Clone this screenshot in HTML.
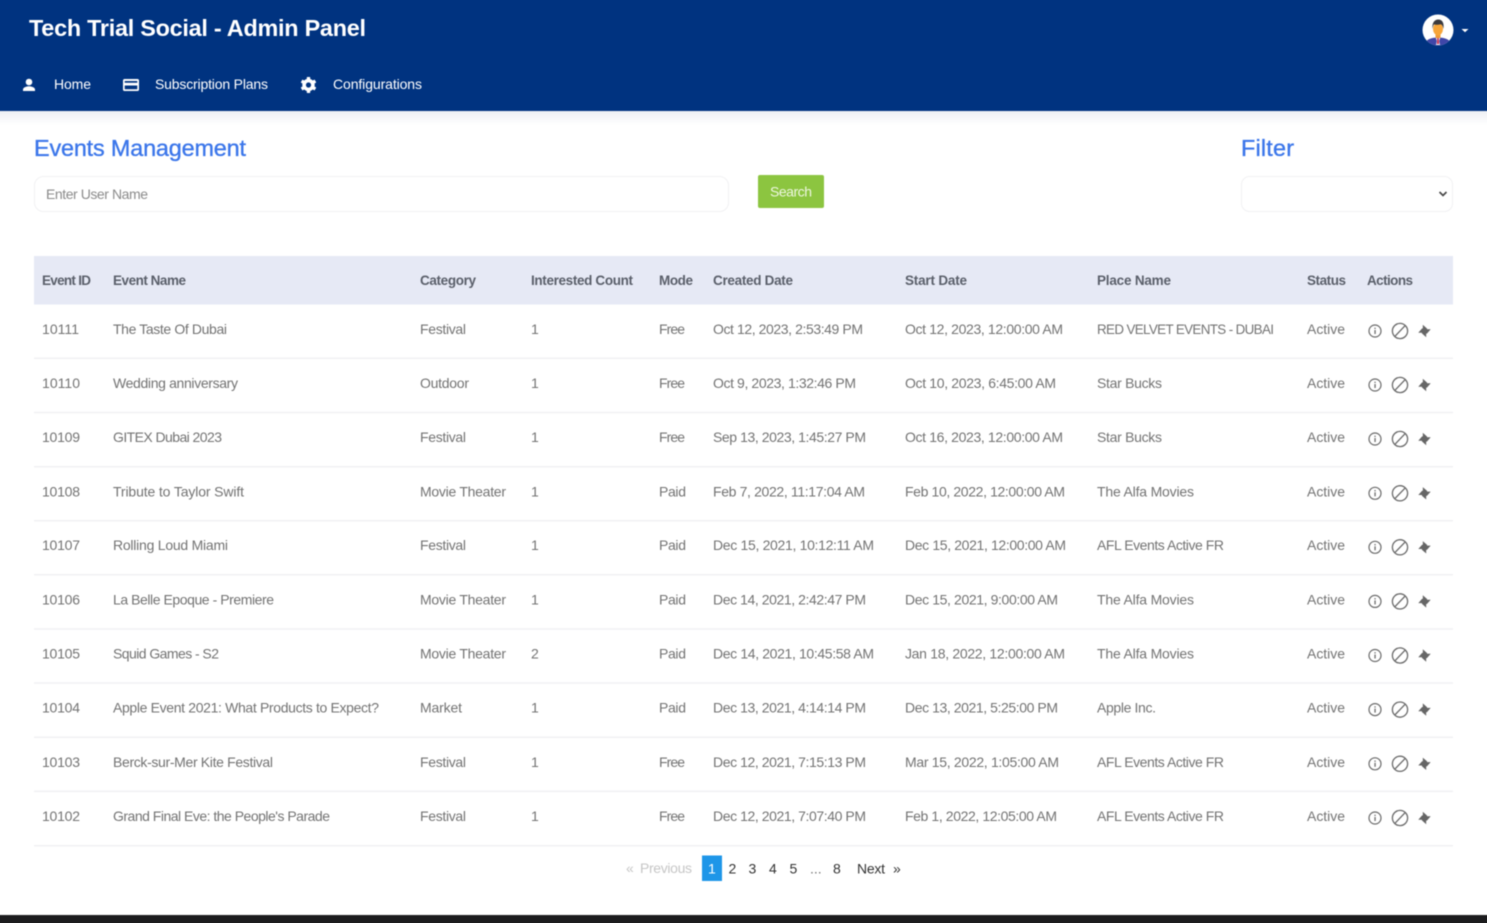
<!DOCTYPE html>
<html lang="en">
<head>
<meta charset="utf-8">
<title>Tech Trial Social - Admin Panel</title>
<style>
html,body{margin:0;padding:0;width:1487px;height:923px;overflow:hidden;background:#fff}
svg{display:block}
#r{filter:blur(.4px)}
text{font-family:"Liberation Sans",Arial,sans-serif}
.c{font-size:14px;fill:#737373}
.h{font-size:13.5px;font-weight:700;fill:#5a5f6a}
.n{font-size:14px;fill:#fff}
.t{font-size:23.4px;font-weight:700;fill:#fff}
.b{font-size:23.4px;fill:#3b76ea;stroke:#3b76ea;stroke-width:.35px}
.p{font-size:14px;fill:#333}
.d{font-size:14px;fill:#c6c6c6}
</style>
</head>
<body>
<svg width="1487" height="923" viewBox="0 0 1487 923" xmlns="http://www.w3.org/2000/svg">
<defs>
<linearGradient id="sh" x1="0" y1="0" x2="0" y2="1"><stop offset="0" stop-color="#eef0f4"/><stop offset="1" stop-color="#fff"/></linearGradient>
<path id="arm" d="M-1.700 1V-6.200L2.600-2.400V1z" fill="#666"/>
<g id="ic">
<circle cx="1375" cy="331" r="6" fill="none" stroke="#6a6a6a" stroke-width="1.200"/>
<rect x="1374.400" y="330" width="1.300" height="4" fill="#6a6a6a"/><rect x="1374.400" y="327.700" width="1.300" height="1.300" fill="#6a6a6a"/>
<circle cx="1400" cy="331" r="7.600" fill="none" stroke="#6a6a6a" stroke-width="1.300"/>
<path d="M1394.800 336.400L1405.200 325.600" stroke="#6a6a6a" stroke-width="1.300"/>
<g transform="translate(1424.500 331)">
<use href="#arm"/><use href="#arm" transform="rotate(90)"/><use href="#arm" transform="rotate(180)"/><use href="#arm" transform="rotate(270)"/>
</g>
</g>
</defs>

<g id="r">
<rect x="-10" y="-10" width="1507" height="943" fill="#fff"/>
<rect x="-10" y="-10" width="1507" height="121" fill="#003380"/>
<rect x="-10" y="111" width="1507" height="14" fill="url(#sh)"/>
<text class="t" x="29" y="36" textLength="337">Tech Trial Social - Admin Panel</text>

<circle cx="29" cy="82" r="3.300" fill="#fff"/>
<path d="M23 91v-1.600c0-2 3.600-3.200 6-3.200s6 1.200 6 3.200V91z" fill="#fff"/>
<text class="n" x="54" y="89" textLength="37">Home</text>

<path fill-rule="evenodd" d="M124.500 79h13c.9 0 1.500.7 1.500 1.500v9c0 .9-.6 1.500-1.500 1.500h-13c-.9 0-1.500-.6-1.500-1.500v-9c0-.8.6-1.500 1.500-1.500zM124.700 81v1.800h12.600V81zM124.700 85.500v3.800h12.600v-3.800z" fill="#fff"/>
<text class="n" x="155" y="89" textLength="113">Subscription Plans</text>

<g transform="translate(308.500 85)">
<circle r="4.400" fill="none" stroke="#fff" stroke-width="3.600"/>
<g fill="#fff">
<rect x="-1.700" y="-8" width="3.400" height="3" rx=".5"/>
<rect x="-1.700" y="5" width="3.400" height="3" rx=".5"/>
<rect x="-1.700" y="-8" width="3.400" height="3" rx=".5" transform="rotate(60)"/>
<rect x="-1.700" y="-8" width="3.400" height="3" rx=".5" transform="rotate(120)"/>
<rect x="-1.700" y="-8" width="3.400" height="3" rx=".5" transform="rotate(240)"/>
<rect x="-1.700" y="-8" width="3.400" height="3" rx=".5" transform="rotate(300)"/>
</g>
</g>
<text class="n" x="333" y="89" textLength="89">Configurations</text>

<clipPath id="av"><circle cx="1438" cy="30" r="15.500"/></clipPath>
<circle cx="1438" cy="30" r="15.500" fill="#fff"/>
<g clip-path="url(#av)">
<path d="M1426 46v-3c0-3.500 5-5.500 12-5.500s12 2 12 5.500v3z" fill="#3f46a8"/>
<path d="M1435.500 37h5l-1.300 4 .8 4h-4l.8-4z" fill="#f3f3f3"/>
<path d="M1437.200 38h1.600l.3 6h-2.200z" fill="#c8385a"/>
<rect x="1435.500" y="32" width="5" height="6" fill="#f09a35"/>
<ellipse cx="1438" cy="29" rx="5" ry="6.300" fill="#f6a53a"/>
<path d="M1432.500 29c-.8-6 2-9.500 5.800-9.500s6 3 5.200 9.500c-.6-3-1.500-4.500-3-4.800-2.500.8-5 .6-6.500.2-1 1-1.200 2.800-1.500 4.600z" fill="#3a3a3e"/>
</g>
<path d="M1461.500 29h7l-3.500 3.200z" fill="#fff"/>

<text class="b" x="34" y="156" textLength="212">Events Management</text>
<text class="b" x="1241" y="156" textLength="53">Filter</text>

<rect x="34.500" y="176.500" width="694" height="35" rx="9" fill="#fff" stroke="#f1f1f3"/>
<text x="46" y="199" font-size="14" fill="#8b8b8b" textLength="102">Enter User Name</text>
<rect x="758" y="175" width="66" height="33" rx="2" fill="#8cc540"/>
<text x="770" y="196.500" font-size="14" fill="#eef7e0" textLength="42">Search</text>
<rect x="1241.500" y="176.500" width="211" height="35" rx="8" fill="#fff" stroke="#f1f1f3"/>
<path d="M1439.500 192l3.500 3.500 3.500-3.500" fill="none" stroke="#444" stroke-width="1.600"/>

<rect x="34" y="256" width="1419" height="48.500" fill="#e6e9f5"/>
<text class="h" x="42" y="285" textLength="49">Event ID</text>
<text class="h" x="113" y="285" textLength="73">Event Name</text>
<text class="h" x="420" y="285" textLength="56">Category</text>
<text class="h" x="531" y="285" textLength="102">Interested Count</text>
<text class="h" x="659" y="285" textLength="34">Mode</text>
<text class="h" x="713" y="285" textLength="80">Created Date</text>
<text class="h" x="905" y="285" textLength="62">Start Date</text>
<text class="h" x="1097" y="285" textLength="74">Place Name</text>
<text class="h" x="1307" y="285" textLength="39">Status</text>
<text class="h" x="1367" y="285" textLength="46">Actions</text>

<text class="c" x="42" y="334" textLength="37">10111</text><text class="c" x="113" y="334" textLength="114">The Taste Of Dubai</text><text class="c" x="420" y="334" textLength="46">Festival</text><text class="c" x="531" y="334">1</text><text class="c" x="659" y="334" textLength="26">Free</text><text class="c" x="713" y="334" textLength="150">Oct 12, 2023, 2:53:49 PM</text><text class="c" x="905" y="334" textLength="158">Oct 12, 2023, 12:00:00 AM</text><text class="c" x="1097" y="334" textLength="177" style="font-size:13.4px">RED VELVET EVENTS - DUBAI</text><text class="c" x="1307" y="334" textLength="38">Active</text>
<use href="#ic"/><rect x="34" y="357.500" width="1419" height="1.500" fill="#f1f1f3"/>

<text class="c" x="42" y="388" textLength="38">10110</text><text class="c" x="113" y="388" textLength="125">Wedding anniversary</text><text class="c" x="420" y="388" textLength="49">Outdoor</text><text class="c" x="531" y="388">1</text><text class="c" x="659" y="388" textLength="26">Free</text><text class="c" x="713" y="388" textLength="143">Oct 9, 2023, 1:32:46 PM</text><text class="c" x="905" y="388" textLength="151">Oct 10, 2023, 6:45:00 AM</text><text class="c" x="1097" y="388" textLength="65">Star Bucks</text><text class="c" x="1307" y="388" textLength="38">Active</text>
<use href="#ic" y="54"/><rect x="34" y="411.800" width="1419" height="1.500" fill="#f1f1f3"/>

<text class="c" x="42" y="442" textLength="38">10109</text><text class="c" x="113" y="442" textLength="109">GITEX Dubai 2023</text><text class="c" x="420" y="442" textLength="46">Festival</text><text class="c" x="531" y="442">1</text><text class="c" x="659" y="442" textLength="26">Free</text><text class="c" x="713" y="442" textLength="153">Sep 13, 2023, 1:45:27 PM</text><text class="c" x="905" y="442" textLength="158">Oct 16, 2023, 12:00:00 AM</text><text class="c" x="1097" y="442" textLength="65">Star Bucks</text><text class="c" x="1307" y="442" textLength="38">Active</text>
<use href="#ic" y="108"/><rect x="34" y="466" width="1419" height="1.500" fill="#f1f1f3"/>

<text class="c" x="42" y="496.500" textLength="38">10108</text><text class="c" x="113" y="496.500" textLength="131">Tribute to Taylor Swift</text><text class="c" x="420" y="496.500" textLength="86">Movie Theater</text><text class="c" x="531" y="496.500">1</text><text class="c" x="659" y="496.500" textLength="27">Paid</text><text class="c" x="713" y="496.500" textLength="152">Feb 7, 2022, 11:17:04 AM</text><text class="c" x="905" y="496.500" textLength="160">Feb 10, 2022, 12:00:00 AM</text><text class="c" x="1097" y="496.500" textLength="97">The Alfa Movies</text><text class="c" x="1307" y="496.500" textLength="38">Active</text>
<use href="#ic" y="162.300"/><rect x="34" y="520" width="1419" height="1.500" fill="#f1f1f3"/>

<text class="c" x="42" y="550" textLength="38">10107</text><text class="c" x="113" y="550" textLength="115">Rolling Loud Miami</text><text class="c" x="420" y="550" textLength="46">Festival</text><text class="c" x="531" y="550">1</text><text class="c" x="659" y="550" textLength="27">Paid</text><text class="c" x="713" y="550" textLength="161">Dec 15, 2021, 10:12:11 AM</text><text class="c" x="905" y="550" textLength="161">Dec 15, 2021, 12:00:00 AM</text><text class="c" x="1097" y="550" textLength="127">AFL Events Active FR</text><text class="c" x="1307" y="550" textLength="38">Active</text>
<use href="#ic" y="216.300"/><rect x="34" y="574" width="1419" height="1.500" fill="#f1f1f3"/>

<text class="c" x="42" y="604.500" textLength="38">10106</text><text class="c" x="113" y="604.500" textLength="161">La Belle Epoque - Premiere</text><text class="c" x="420" y="604.500" textLength="86">Movie Theater</text><text class="c" x="531" y="604.500">1</text><text class="c" x="659" y="604.500" textLength="27">Paid</text><text class="c" x="713" y="604.500" textLength="153">Dec 14, 2021, 2:42:47 PM</text><text class="c" x="905" y="604.500" textLength="153">Dec 15, 2021, 9:00:00 AM</text><text class="c" x="1097" y="604.500" textLength="97">The Alfa Movies</text><text class="c" x="1307" y="604.500" textLength="38">Active</text>
<use href="#ic" y="270.400"/><rect x="34" y="628.200" width="1419" height="1.500" fill="#f1f1f3"/>

<text class="c" x="42" y="658.500" textLength="38">10105</text><text class="c" x="113" y="658.500" textLength="106">Squid Games - S2</text><text class="c" x="420" y="658.500" textLength="86">Movie Theater</text><text class="c" x="531" y="658.500">2</text><text class="c" x="659" y="658.500" textLength="27">Paid</text><text class="c" x="713" y="658.500" textLength="161">Dec 14, 2021, 10:45:58 AM</text><text class="c" x="905" y="658.500" textLength="160">Jan 18, 2022, 12:00:00 AM</text><text class="c" x="1097" y="658.500" textLength="97">The Alfa Movies</text><text class="c" x="1307" y="658.500" textLength="38">Active</text>
<use href="#ic" y="324.500"/><rect x="34" y="682.300" width="1419" height="1.500" fill="#f1f1f3"/>

<text class="c" x="42" y="712.500" textLength="38">10104</text><text class="c" x="113" y="712.500" textLength="266">Apple Event 2021: What Products to Expect?</text><text class="c" x="420" y="712.500" textLength="42">Market</text><text class="c" x="531" y="712.500">1</text><text class="c" x="659" y="712.500" textLength="27">Paid</text><text class="c" x="713" y="712.500" textLength="153">Dec 13, 2021, 4:14:14 PM</text><text class="c" x="905" y="712.500" textLength="153">Dec 13, 2021, 5:25:00 PM</text><text class="c" x="1097" y="712.500" textLength="59">Apple Inc.</text><text class="c" x="1307" y="712.500" textLength="38">Active</text>
<use href="#ic" y="378.600"/><rect x="34" y="736.500" width="1419" height="1.500" fill="#f1f1f3"/>

<text class="c" x="42" y="767" textLength="38">10103</text><text class="c" x="113" y="767" textLength="160">Berck-sur-Mer Kite Festival</text><text class="c" x="420" y="767" textLength="46">Festival</text><text class="c" x="531" y="767">1</text><text class="c" x="659" y="767" textLength="26">Free</text><text class="c" x="713" y="767" textLength="153">Dec 12, 2021, 7:15:13 PM</text><text class="c" x="905" y="767" textLength="154">Mar 15, 2022, 1:05:00 AM</text><text class="c" x="1097" y="767" textLength="127">AFL Events Active FR</text><text class="c" x="1307" y="767" textLength="38">Active</text>
<use href="#ic" y="432.800"/><rect x="34" y="790.600" width="1419" height="1.500" fill="#f1f1f3"/>

<text class="c" x="42" y="821" textLength="38">10102</text><text class="c" x="113" y="821" textLength="217">Grand Final Eve: the People's Parade</text><text class="c" x="420" y="821" textLength="46">Festival</text><text class="c" x="531" y="821">1</text><text class="c" x="659" y="821" textLength="26">Free</text><text class="c" x="713" y="821" textLength="153">Dec 12, 2021, 7:07:40 PM</text><text class="c" x="905" y="821" textLength="152">Feb 1, 2022, 12:05:00 AM</text><text class="c" x="1097" y="821" textLength="127">AFL Events Active FR</text><text class="c" x="1307" y="821" textLength="38">Active</text>
<use href="#ic" y="487"/><rect x="34" y="845" width="1419" height="1.500" fill="#f1f1f3"/>

<text class="d" x="626" y="873">«</text>
<text class="d" x="640" y="873" textLength="52">Previous</text>
<rect x="702" y="855.500" width="20" height="25.500" fill="#1e96e8"/>
<text x="708" y="873.500" font-size="14" fill="#fff">1</text>
<text class="p" x="728.500" y="873.500">2</text>
<text class="p" x="748.500" y="873.500">3</text>
<text class="p" x="769" y="873.500">4</text>
<text class="p" x="789.500" y="873.500">5</text>
<text class="p" x="810" y="873.500" style="fill:#777">...</text>
<text class="p" x="833" y="873.500">8</text>
<text class="p" x="857" y="873.500" textLength="28">Next</text>
<text class="p" x="893" y="873.500">»</text>

<rect x="-10" y="915" width="1507" height="20" fill="#1c1c1e"/>
</g>
</svg>
</body>
</html>
